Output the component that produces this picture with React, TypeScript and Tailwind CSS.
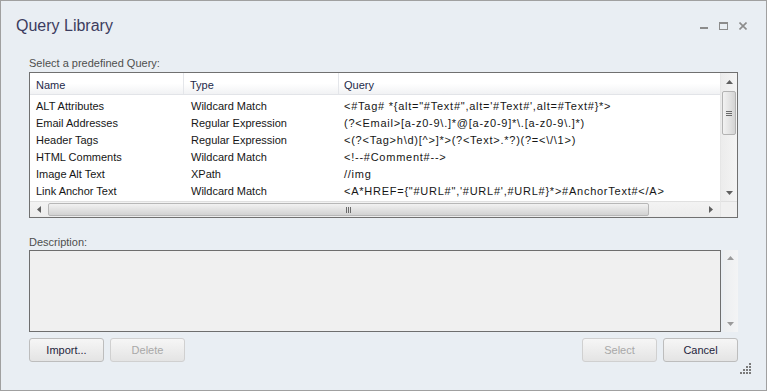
import React from "react";

const rows = [
  ["ALT Attributes", "Wildcard Match", `<#Tag# *{alt="#Text#",alt='#Text#',alt=#Text#}*>`],
  ["Email Addresses", "Regular Expression", `(?<Email>[a-z0-9\\.]*@[a-z0-9]*\\.[a-z0-9\\.]*)`],
  ["Header Tags", "Regular Expression", `<(?<Tag>h\\d)[^>]*>(?<Text>.*?)(?=<\\/\\1>)`],
  ["HTML Comments", "Wildcard Match", `<!--#Comment#-->`],
  ["Image Alt Text", "XPath", `//img`],
  ["Link Anchor Text", "Wildcard Match", `<A*HREF={"#URL#",'#URL#',#URL#}*>#AnchorText#</A>`],
];

function Tri({ dir, color = "#5f5f5f" }: { dir: "up" | "down" | "left" | "right"; color?: string }) {
  const pts =
    dir === "up"
      ? "0,4 7,4 3.5,0"
      : dir === "down"
      ? "0,0 7,0 3.5,4"
      : dir === "left"
      ? "4,0 4,7 0,3.5"
      : "0,0 0,7 4,3.5";
  const w = dir === "up" || dir === "down" ? 7 : 4;
  const h = dir === "up" || dir === "down" ? 4 : 7;
  return (
    <svg width={w} height={h} viewBox={`0 0 ${w} ${h}`}>
      <polygon points={pts} fill={color} />
    </svg>
  );
}

function Btn({ label, disabled }: { label: string; disabled?: boolean }) {
  return (
    <div
      className={`w-[75px] h-[24px] flex items-center justify-center rounded-[3px] border text-[11px] bg-gradient-to-b from-[#f6f6f6] to-[#e4e4e4] ${
        disabled ? "border-[#d0d0d0] text-[#a8a8a8]" : "border-[#bdbdbd] text-[#1e1e3c]"
      }`}
    >
      {label}
    </div>
  );
}

export default function App() {
  return (
    <div className="w-[767px] h-[391px] border border-[#a0a0a0] bg-[#e9eef3] flex flex-col font-['Liberation_Sans',Arial,sans-serif] overflow-hidden">
      {/* title bar */}
      <div className="h-[50px] flex items-center justify-between pl-[15px] pr-[19px]">
        <div className="text-[16px] text-[#3c3c5e] leading-none">Query Library</div>
        <div className="flex items-center gap-[11px] mt-[-1px]">
          <svg width="8" height="8" viewBox="0 0 8 8">
            <rect x="0" y="5" width="8" height="2" fill="#8c8c8c" />
          </svg>
          <svg width="9" height="8" viewBox="0 0 9 8">
            <rect x="0.5" y="0.5" width="8" height="7" fill="none" stroke="#8c8c8c" />
            <rect x="0" y="0" width="9" height="2" fill="#8c8c8c" />
          </svg>
          <svg width="8" height="8" viewBox="0 0 8 8">
            <path d="M0.5 0.5 L7.5 7.5 M7.5 0.5 L0.5 7.5" stroke="#8c8c8c" strokeWidth="1.6" />
          </svg>
        </div>
      </div>

      <div className="px-[28px] flex flex-col">
        <div className="mt-[5px] h-[14px] leading-[14px] text-[11px] text-[#4e4e4e]">Select a predefined Query:</div>

        {/* grid */}
        <div className="mt-[2px] h-[146px] border border-[#707070] bg-white flex">
          <div className="flex-1 flex flex-col min-w-0">
            <div className="h-[22px] flex text-[11px] text-[#1e2a4a] bg-gradient-to-b from-white via-white to-[#f1f2f4] border-b border-[#e2e4e8]">
              <div className="w-[154px] pl-[6px] pt-[3px] flex items-center border-r border-[#e4e6ea]">Name</div>
              <div className="w-[155px] pl-[6px] pt-[3px] flex items-center border-r border-[#e4e6ea]">Type</div>
              <div className="flex-1 pl-[5px] pt-[3px] flex items-center">Query</div>
            </div>
            <div className="flex-1 pt-[3px] text-[11px] text-[#161616] overflow-hidden">
              {rows.map((r) => (
                <div key={r[0]} className="h-[17px] flex items-center whitespace-nowrap">
                  <div className="w-[154px] pl-[6px]">{r[0]}</div>
                  <div className="w-[155px] pl-[7px]">{r[1]}</div>
                  <div className="flex-1 pl-[5px] tracking-[0.75px]">{r[2]}</div>
                </div>
              ))}
            </div>
            {/* h scrollbar */}
            <div className="h-[16px] flex items-center bg-gradient-to-b from-[#f3f3f3] to-[#ececec] border-t border-[#e0e0e0]">
              <div className="w-[18px] flex justify-center">
                <Tri dir="left" />
              </div>
              <div className="flex-1 flex items-center">
                <div className="w-[601px] h-[13px] rounded-[2px] border border-[#b7b7b7] bg-gradient-to-b from-[#f2f2f2] via-[#e2e2e2] to-[#d2d2d2] flex items-center justify-center">
                  <div className="flex gap-[1px]">
                    <div className="w-[1px] h-[6px] bg-[#6a6a6a]" />
                    <div className="w-[1px] h-[6px] bg-[#6a6a6a]" />
                    <div className="w-[1px] h-[6px] bg-[#6a6a6a]" />
                  </div>
                </div>
              </div>
              <div className="w-[18px] flex justify-center">
                <Tri dir="right" />
              </div>
            </div>
          </div>
          {/* v scrollbar */}
          <div className="w-[17px] flex flex-col bg-gradient-to-r from-[#ececec] to-[#f4f4f4] border-l border-[#e6e6e6]">
            <div className="h-[17px] flex items-center justify-center pt-[1px]">
              <Tri dir="up" />
            </div>
            <div className="flex-1 flex flex-col">
              <div className="mt-[1px] mx-[1px] h-[44px] rounded-[2px] border border-[#b3b3b3] bg-gradient-to-r from-[#f2f2f2] via-[#e4e4e4] to-[#d4d4d4] flex items-center justify-center">
                <div className="flex flex-col gap-[1px]">
                  <div className="w-[6px] h-[1px] bg-[#6a6a6a]" />
                  <div className="w-[6px] h-[1px] bg-[#6a6a6a]" />
                  <div className="w-[6px] h-[1px] bg-[#6a6a6a]" />
                </div>
              </div>
            </div>
            <div className="h-[17px] flex items-center justify-center">
              <Tri dir="down" />
            </div>
            <div className="h-[16px] bg-[#f0f0f0] border-t border-[#e0e0e0]" />
          </div>
        </div>

        <div className="mt-[17px] h-[14px] leading-[14px] text-[11px] text-[#4e4e4e]">Description:</div>
        <div className="mt-[1px] h-[82px] flex gap-[2px]">
          <div className="flex-1 border border-[#6e6e6e] bg-[#f0f0f0]" />
          <div className="w-[15px] bg-gradient-to-r from-[#eceef0] to-[#f3f4f5] flex flex-col items-center justify-between py-[6px]">
            <Tri dir="up" color="#9a9a9a" />
            <Tri dir="down" color="#9a9a9a" />
          </div>
        </div>

        <div className="mt-[6px] flex justify-between">
          <div className="flex gap-[6px]">
            <Btn label="Import..." />
            <Btn label="Delete" disabled />
          </div>
          <div className="flex gap-[6px]">
            <Btn label="Select" disabled />
            <Btn label="Cancel" />
          </div>
        </div>
      </div>

      <div className="flex justify-end pr-[14px] mt-[1px]">
        <svg width="12" height="12" viewBox="0 0 12 12">
          {[
            [9, 0],
            [6, 3],
            [9, 3],
            [3, 6],
            [6, 6],
            [9, 6],
            [0, 9],
            [3, 9],
            [6, 9],
            [9, 9],
          ].map(([x, y]) => (
            <rect key={`${x}-${y}`} x={x} y={y} width="2" height="2" fill="#7a7a7a" />
          ))}
        </svg>
      </div>
    </div>
  );
}
